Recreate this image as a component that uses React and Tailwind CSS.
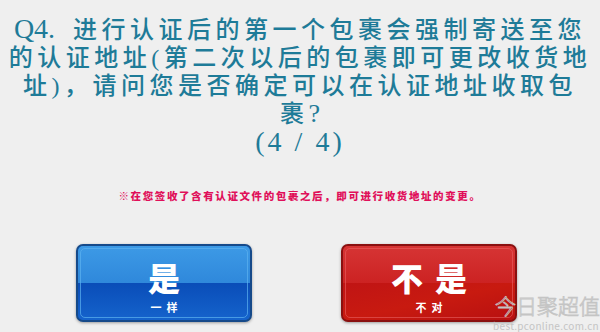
const cjk = { fontFamily: '"Liberation Serif", "Noto Sans CJK SC", serif' };
const sans = { fontFamily: '"Noto Sans CJK SC", "Liberation Sans", sans-serif' };

const ChoiceButton = ({ big, small, color }) => {
  const blue = color === 'blue';
  return (
    <button
      className={`relative w-[176px] h-[78px] rounded-[7px] border-2 overflow-hidden shadow-[0_1px_3px_rgba(0,0,0,0.35)] ${
        blue ? 'border-[#164a8a] bg-[#0b55c0]' : 'border-[#8a1010] bg-[#c41414]'
      }`}
      style={sans}
    >
      <div
        className={`absolute inset-x-0 top-0 h-1/2 ${
          blue
            ? 'bg-gradient-to-b from-[#3d9ae6] to-[#2f88db]'
            : 'bg-gradient-to-b from-[#d63434] to-[#cc2222]'
        }`}
      />
      <div
        className={`absolute inset-x-0 bottom-0 h-1/2 ${
          blue
            ? 'bg-gradient-to-b from-[#0a4db8] to-[#1563cc]'
            : 'bg-gradient-to-br from-[#c01414] via-[#c81a10] to-[#b81010]'
        }`}
      />
      <div
        className={`absolute inset-[2px] rounded-[5px] border ${
          blue ? 'border-[#5cb2f0]/70' : 'border-[#e86060]/60'
        }`}
      />
      <div className="relative flex flex-col items-center pt-[7px] text-white">
        <span className="text-[32px] leading-[32px] font-black tracking-[12px] pl-[12px]">{big}</span>
        <span className="mt-[8px] text-[11px] leading-[12px] font-bold tracking-[5px] pl-[5px]">{small}</span>
      </div>
    </button>
  );
};

export default function App() {
  return (
    <div className="relative w-[600px] h-[332px] bg-[#efefef] overflow-hidden">
      <div
        className="pt-[15px] text-center text-[24px] leading-[28px] tracking-[4.5px] text-[#1e7b98] font-medium"
        style={cjk}
      >
        <p>
          <span className="text-[28px] tracking-normal">Q4.</span>
          <span className="inline-block w-[18px]" />
          进行认证后的第一个包裹会强制寄送至您
        </p>
        <p>的认证地址(第二次以后的包裹即可更改收货地</p>
        <p>址)，请问您是否确定可以在认证地址收取包</p>
        <p>
          裹<span className="text-[26px] tracking-normal">?</span>
        </p>
        <p className="text-[28px] tracking-[3px]">(4 / 4)</p>
      </div>

      <p
        className="mt-[34px] text-center text-[10.5px] leading-[12px] tracking-[1.6px] font-black text-[#e0105a]"
        style={sans}
      >
        ※在您签收了含有认证文件的包裹之后，即可进行收货地址的变更。
      </p>

      <div className="mt-[42px] flex gap-[89px] pl-[76px]">
        <ChoiceButton big="是" small="一样" color="blue" />
        <ChoiceButton big="不是" small="不对" color="red" />
      </div>

      <span
        className="absolute right-[0px] top-[294px] text-[21px] leading-[22px] font-light text-transparent [-webkit-text-stroke:0.8px_#c4c4c4]"
        style={sans}
      >
        今日聚超值
      </span>
      <span
        className="absolute right-[1px] bottom-[1px] text-[10px] leading-[11px] tracking-[0.3px] text-[#c4c4c4]"
        style={sans}
      >
        best.pconline.com.cn
      </span>
    </div>
  );
}
